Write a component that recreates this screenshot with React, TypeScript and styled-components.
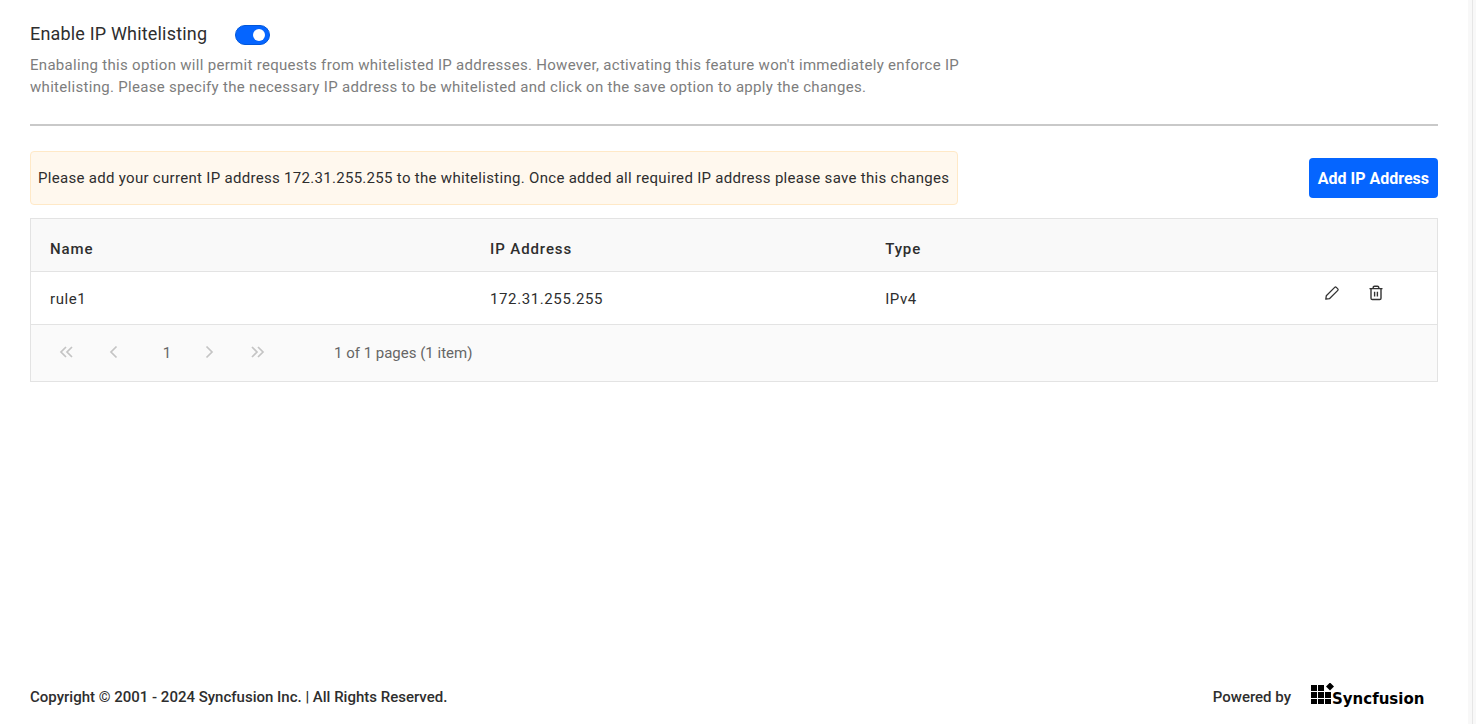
import React, { useState } from "react";
import styled, { createGlobalStyle } from "styled-components";

const GlobalStyle = createGlobalStyle`
  *, *::before, *::after { box-sizing: border-box; }
  body {
    margin: 0;
    background: #fff;
    color: #2e2e2e;
    font-family: Roboto, "Liberation Sans", sans-serif;
    font-size: 15px;
    line-height: 22px;
  }
  button { font: inherit; color: inherit; }
`;

const Shell = styled.div`
  display: flex;
  min-height: 100vh;
`;

const Page = styled.div`
  flex: 1;
  min-width: 0;
  display: flex;
  flex-direction: column;
  padding: 22px 30px 13px;
`;

const ScrollGutter = styled.div`
  width: 8px;
  background: #f8f8f8;
  display: flex;
  justify-content: center;
  &::after {
    content: "";
    width: 1px;
    background: #e6e6e6;
  }
`;

const Main = styled.main`
  flex: 1;
`;

const TitleRow = styled.label`
  display: flex;
  width: fit-content;
  align-items: center;
  gap: 28px;
  height: 24px;
`;

const Title = styled.span`
  font-size: 18px;
  line-height: 24px;
  letter-spacing: 0.01em;
`;

const Toggle = styled.input`
  appearance: none;
  width: 35px;
  height: 20px;
  margin: 2px 0 0;
  padding: 4px;
  border: 1px solid #0057db;
  border-radius: 10px;
  background: #0565ff;
  display: flex;
  align-items: center;
  justify-content: flex-end;
  cursor: pointer;
  &::after {
    content: "";
    width: 12px;
    height: 12px;
    border-radius: 50%;
    background: #fff;
  }
  &:not(:checked) {
    background: #8a8a8a;
    border-color: #777;
    justify-content: flex-start;
  }
`;

const Description = styled.p`
  max-width: 960px;
  margin: 8px 0 0;
  color: #7d7d7d;
  letter-spacing: 0.02em;
`;

const Divider = styled.hr`
  margin: 26px 0 25px;
  border: 0;
  height: 2px;
  background: #c9c9c9;
`;

const Toolbar = styled.div`
  display: flex;
  align-items: center;
  justify-content: space-between;
  gap: 24px;
`;

const Notice = styled.p`
  margin: 0;
  padding: 15px 8px 15px 7px;
  border: 1px solid #ffe9c7;
  border-radius: 4px;
  background: #fff8ee;
  letter-spacing: 0.02em;
`;

const AddButton = styled.button`
  height: 40px;
  padding: 2px 9px 0;
  border: 0;
  border-radius: 4px;
  background: #0565ff;
  color: #fff;
  font-size: 16px;
  font-weight: 700;
  white-space: nowrap;
  cursor: pointer;
`;

const Grid = styled.section`
  margin-top: 13px;
  border: 1px solid #e3e3e3;
`;

const Table = styled.table`
  width: 100%;
  border-spacing: 0;
  table-layout: fixed;
  letter-spacing: 0.04em;
`;

const Column = styled.col<{ $share: number }>`
  width: ${(p) => p.$share}%;
`;

const HeadCell = styled.th`
  height: 53px;
  padding: 7px 19px 0;
  border-bottom: 1px solid #e3e3e3;
  background: #f9f9f9;
  text-align: left;
  font-weight: 500;
  letter-spacing: 0.06em;
`;

const Cell = styled.td`
  height: 53px;
  padding: 1px 19px 0;
  border-bottom: 1px solid #e3e3e3;
`;

const Actions = styled.div`
  display: flex;
  gap: 28px;
  padding-bottom: 12px;
`;

const IconButton = styled.button`
  display: flex;
  width: 16px;
  height: 16px;
  padding: 0;
  border: 0;
  background: none;
  cursor: pointer;
`;

const Pager = styled.nav`
  display: flex;
  align-items: center;
  height: 56px;
  padding: 0 27px;
  background: #fafafa;
  color: #666;
`;

const PagerButton = styled.button`
  display: flex;
  justify-content: center;
  width: 16px;
  margin-right: 32px;
  padding: 0 0 2px;
  border: 0;
  background: none;
  color: #c4c4c4;
`;

const CurrentPage = styled.button`
  width: 16px;
  margin: 0 26px 0 5px;
  padding: 0;
  border: 0;
  background: none;
`;

const PagerText = styled.span`
  margin-left: 37px;
`;

const Footer = styled.footer`
  display: flex;
  align-items: center;
  justify-content: space-between;
  font-weight: 500;
`;

const Powered = styled.div`
  display: flex;
  align-items: center;
  gap: 20px;
  padding-right: 11px;
`;

const Brand = styled.a`
  display: flex;
  color: #000;
  text-decoration: none;
`;

const PencilIcon = () => (
  <svg width="16" height="16" viewBox="0 0 16 16" fill="none" stroke="#333" strokeWidth="1.3" strokeLinejoin="round" aria-hidden="true">
    <path d="M1.8 14.2 2.3 10.8 10.7 2.4Q11.5 1.6 12.3 2.4L13.8 3.9Q14.5 4.7 13.8 5.4L5.4 13.7Z" />
  </svg>
);

const TrashIcon = () => (
  <svg width="16" height="16" viewBox="0 0 16 16" fill="none" stroke="#333" strokeWidth="1.4" aria-hidden="true">
    <path d="M1.5 3.6H14.5M5.2 3.4V2.6Q5.2 1.2 6.6 1.2H9.4Q10.8 1.2 10.8 2.6V3.4M3 3.6V13.2Q3 14.5 4.3 14.5H11.7Q13 14.5 13 13.2V3.6M6.6 6.7V11.6M9.4 6.7V11.6" />
  </svg>
);

const chevrons: Record<string, string> = {
  first: "M8 3 3 8 8 13M14 3 9 8 14 13",
  prev: "M10.5 2.5 5 8 10.5 13.5",
  next: "M5.5 2.5 11 8 5.5 13.5",
  last: "M3 3 8 8 3 13M9 3 14 8 9 13",
};

const Chevron = ({ kind }: { kind: string }) => (
  <svg width="16" height="16" viewBox="0 0 16 16" fill="none" stroke="currentColor" strokeWidth="1.7" aria-hidden="true">
    <path d={chevrons[kind]} />
  </svg>
);

const SyncfusionLogo = () => (
  <svg width="116" height="28" viewBox="0 -2 116 28" aria-hidden="true">
    <path d="M0 0H6V6H0ZM7 0H13V6H7ZM0 7H6V13H0ZM7 7H13V13H7ZM14 7H20V13H14ZM0 14H6V19H0ZM7 14H13V19H7ZM14 14H20V19H14ZM19 -2.5 23 1.5 19 5.5 15 1.5Z" />
    <text x="21" y="19" fontFamily="DejaVu Sans, sans-serif" fontSize="15" fontWeight="700">Syncfusion</text>
  </svg>
);

const rules = [{ name: "rule1", address: "172.31.255.255", type: "IPv4" }];

export default function App() {
  const [enabled, setEnabled] = useState(true);
  return (
    <Shell>
      <GlobalStyle />
      <Page>
        <Main>
          <TitleRow>
            <Title>Enable IP Whitelisting</Title>
            <Toggle type="checkbox" role="switch" checked={enabled} onChange={(e) => setEnabled(e.target.checked)} />
          </TitleRow>
          <Description>
            Enabaling this option will permit requests from whitelisted IP addresses. However, activating this feature won't immediately enforce IP whitelisting. Please specify the necessary IP address to be whitelisted and click on the save option to apply the changes.
          </Description>
          <Divider />
          <Toolbar>
            <Notice>
              Please add your current IP address 172.31.255.255 to the whitelisting. Once added all required IP address please save this changes
            </Notice>
            <AddButton type="button">Add IP Address</AddButton>
          </Toolbar>
          <Grid>
            <Table>
              <colgroup>
                <Column $share={31.3} />
                <Column $share={28.1} />
                <Column $share={31.2} />
                <Column $share={9.4} />
              </colgroup>
              <thead>
                <tr>
                  <HeadCell scope="col">Name</HeadCell>
                  <HeadCell scope="col">IP Address</HeadCell>
                  <HeadCell scope="col">Type</HeadCell>
                  <HeadCell scope="col" aria-label="Actions" />
                </tr>
              </thead>
              <tbody>
                {rules.map((rule) => (
                  <tr key={rule.name}>
                    <Cell>{rule.name}</Cell>
                    <Cell>{rule.address}</Cell>
                    <Cell>{rule.type}</Cell>
                    <Cell>
                      <Actions>
                        <IconButton type="button" aria-label="Edit"><PencilIcon /></IconButton>
                        <IconButton type="button" aria-label="Delete"><TrashIcon /></IconButton>
                      </Actions>
                    </Cell>
                  </tr>
                ))}
              </tbody>
            </Table>
            <Pager aria-label="Pagination">
              <PagerButton type="button" aria-label="First page"><Chevron kind="first" /></PagerButton>
              <PagerButton type="button" aria-label="Previous page"><Chevron kind="prev" /></PagerButton>
              <CurrentPage type="button" aria-current="page">1</CurrentPage>
              <PagerButton type="button" aria-label="Next page"><Chevron kind="next" /></PagerButton>
              <PagerButton type="button" aria-label="Last page"><Chevron kind="last" /></PagerButton>
              <PagerText>1 of 1 pages (1 item)</PagerText>
            </Pager>
          </Grid>
        </Main>
        <Footer>
          <span>Copyright © 2001 - 2024 Syncfusion Inc. | All Rights Reserved.</span>
          <Powered>
            <span>Powered by</span>
            <Brand href="#" aria-label="Syncfusion"><SyncfusionLogo /></Brand>
          </Powered>
        </Footer>
      </Page>
      <ScrollGutter />
    </Shell>
  );
}
